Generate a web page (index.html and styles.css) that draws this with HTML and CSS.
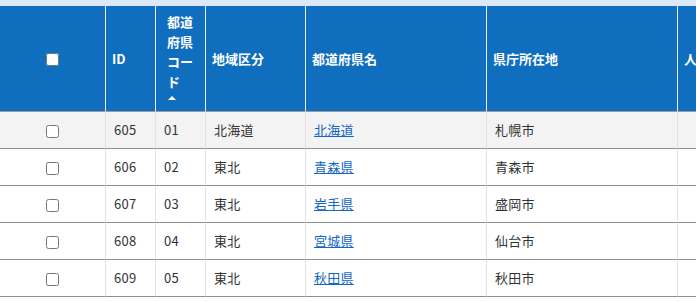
FILE: index.html
```html
<!DOCTYPE html>
<html lang="ja">
<head>
<meta charset="utf-8">
<title>都道府県</title>
<link rel="stylesheet" href="styles.css">
</head>
<body>
<div class="strip"></div>
<div class="wrap">
<table class="grid">
  <colgroup>
    <col class="c-check">
    <col class="c-id">
    <col class="c-code">
    <col class="c-region">
    <col class="c-name">
    <col class="c-capital">
    <col class="c-pop">
  </colgroup>
  <thead>
    <tr>
      <th class="center"><input type="checkbox" class="cb"></th>
      <th>ID</th>
      <th class="code-th">都道府県コード<span class="sort"></span></th>
      <th>地域区分</th>
      <th>都道府県名</th>
      <th>県庁所在地</th>
      <th class="last">人口</th>
    </tr>
  </thead>
  <tbody>
    <tr class="hl">
      <td class="center"><input type="checkbox" class="cb"></td>
      <td>605</td><td>01</td><td>北海道</td><td><a href="#">北海道</a></td><td>札幌市</td><td class="last"></td>
    </tr>
    <tr>
      <td class="center"><input type="checkbox" class="cb"></td>
      <td>606</td><td>02</td><td>東北</td><td><a href="#">青森県</a></td><td>青森市</td><td class="last"></td>
    </tr>
    <tr>
      <td class="center"><input type="checkbox" class="cb"></td>
      <td>607</td><td>03</td><td>東北</td><td><a href="#">岩手県</a></td><td>盛岡市</td><td class="last"></td>
    </tr>
    <tr>
      <td class="center"><input type="checkbox" class="cb"></td>
      <td>608</td><td>04</td><td>東北</td><td><a href="#">宮城県</a></td><td>仙台市</td><td class="last"></td>
    </tr>
    <tr>
      <td class="center"><input type="checkbox" class="cb"></td>
      <td>609</td><td>05</td><td>東北</td><td><a href="#">秋田県</a></td><td>秋田市</td><td class="last"></td>
    </tr>
  </tbody>
</table>
</div>
</body>
</html>
```
FILE: styles.css
```css
html, body {
  margin: 0;
  padding: 0;
  background: #fff;
}
body {
  font-family: "Noto Sans CJK JP", "Noto Sans", sans-serif;
  font-size: 13px;
  color: #333;
  width: 696px;
  height: 303px;
  overflow: hidden;
}
.strip {
  height: 6px;
  background: #dce9f8;
}
.wrap {
  width: 696px;
  overflow: hidden;
}
.grid {
  table-layout: fixed;
  border-collapse: separate;
  border-spacing: 0;
  width: 800px;
}
.c-check { width: 106px; }
.c-id { width: 50px; }
.c-code { width: 50px; }
.c-region { width: 100px; }
.c-name { width: 181px; }
.c-capital { width: 191px; }
.c-pop { width: 122px; }

.grid th {
  background: #0f6ebe;
  color: #fff;
  font-weight: bold;
  font-size: 13px;
  line-height: 20px;
  text-align: left;
  height: 106px;
  padding: 0 6px;
  border-right: 1px solid #e6eef8;
  border-bottom: 1px solid #9a9a9a;
  vertical-align: middle;
  box-sizing: border-box;
}
.grid th.code-th {
  vertical-align: top;
  padding: 6px 11px 0 11px;
}
.sort {
  display: block;
  width: 0;
  height: 0;
  margin-top: 4px;
  margin-left: 1px;
  border-left: 4px solid transparent;
  border-right: 4px solid transparent;
  border-bottom: 4px solid #fff;
}
.grid td {
  height: 36px;
  padding: 0 8px;
  border-right: 1px solid #e2e2e2;
  border-bottom: 1px solid #8e8e8e;
  vertical-align: middle;
  line-height: 20px;
  white-space: nowrap;
  letter-spacing: 0.02em;
}
.grid th.last, .grid td.last {
  border-right: none;
}
.grid .center {
  text-align: center;
  padding: 0;
}
.grid tr.hl td {
  background: #f3f3f3;
}
.cb {
  width: 13px;
  height: 13px;
  margin: 0;
  vertical-align: middle;
}
.grid a {
  color: #1366c2;
  text-decoration: underline;
}
```
